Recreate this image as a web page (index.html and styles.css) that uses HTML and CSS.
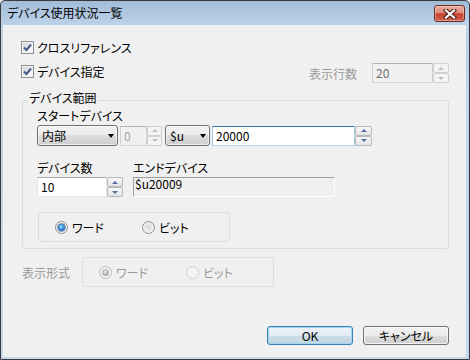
FILE: index.html
```html
<!DOCTYPE html>
<html lang="ja">
<head>
<meta charset="utf-8">
<title>デバイス使用状況一覧</title>
<link rel="stylesheet" href="styles.css">
</head>
<body>
<div class="window">
  <div class="titlebar">
    <span class="title">デバイス使用状況一覧</span>
    <div class="close">
      <svg width="14" height="10" viewBox="0 0 14 10">
        <path d="M3 1.5 L11 8.5 M11 1.5 L3 8.5" stroke="#4a1c17" stroke-width="4.2" stroke-linecap="square" fill="none"/>
        <path d="M3 1.5 L11 8.5 M11 1.5 L3 8.5" stroke="#ffffff" stroke-width="2.2" stroke-linecap="square" fill="none"/>
      </svg>
    </div>
  </div>
  <div class="client">
    <div class="row1">
      <div class="chk-label">
        <span class="checkbox"><svg width="11" height="11" viewBox="0 0 11 11"><path d="M2 5.5 L4.5 8 L9 2.5" stroke="#42578c" stroke-width="2" fill="none"/></svg></span>
        <span>クロスリファレンス</span>
      </div>
    </div>
    <div class="row2">
      <div class="chk-label chk-offset">
        <span class="checkbox"><svg width="11" height="11" viewBox="0 0 11 11"><path d="M2 5.5 L4.5 8 L9 2.5" stroke="#42578c" stroke-width="2" fill="none"/></svg></span>
        <span>デバイス指定</span>
      </div>
      <div class="rows-ctrl">
        <span class="dim rows-label">表示行数</span>
        <div class="spinbox">
          <div class="field disabled w-rows">20</div>
          <div class="spin disabled">
            <span class="spin-btn"><i class="arr-up"></i></span>
            <span class="spin-btn"><i class="arr-down"></i></span>
          </div>
        </div>
      </div>
    </div>

    <fieldset class="group-range">
      <legend>デバイス範囲</legend>
      <div class="range-body">
        <div class="lbl">スタートデバイス</div>
        <div class="start-row">
          <div class="combo w-combo1"><span>内部</span><i class="combo-arrow"></i></div>
          <div class="spinbox gap-after">
            <div class="field disabled w-num0">0</div>
            <div class="spin disabled w-spin15">
              <span class="spin-btn"><i class="arr-up"></i></span>
              <span class="spin-btn"><i class="arr-down"></i></span>
            </div>
          </div>
          <div class="combo w-combo2"><span>$u</span><i class="combo-arrow"></i></div>
          <div class="spinbox">
            <div class="field focus w-start">20000</div>
            <div class="spin w-spin17">
              <span class="spin-btn"><i class="arr-up"></i></span>
              <span class="spin-btn"><i class="arr-down"></i></span>
            </div>
          </div>
        </div>
        <div class="count-row">
          <div class="col col-count">
            <div class="lbl">デバイス数</div>
            <div class="spinbox field-row">
              <div class="field w-count">10</div>
              <div class="spin">
                <span class="spin-btn"><i class="arr-up"></i></span>
                <span class="spin-btn"><i class="arr-down"></i></span>
              </div>
            </div>
          </div>
          <div class="col">
            <div class="lbl">エンドデバイス</div>
            <div class="readonly field-row">$u20009</div>
          </div>
        </div>
        <div class="radio-group range-radios">
          <div class="radio-item"><span class="radio on"></span><span>ワード</span></div>
          <div class="radio-item"><span class="radio"></span><span>ビット</span></div>
        </div>
      </div>
    </fieldset>

    <div class="format-row">
      <span class="dim format-label">表示形式</span>
      <div class="radio-group disabled">
        <div class="radio-item"><span class="radio on"></span><span>ワード</span></div>
        <div class="radio-item"><span class="radio"></span><span>ビット</span></div>
      </div>
    </div>

    <div class="buttons">
      <div class="btn default">OK</div>
      <div class="btn">キャンセル</div>
    </div>
  </div>
</div>
</body>
</html>
```

FILE: styles.css
```css
* { box-sizing: border-box; }
html, body { margin: 0; padding: 0; }
body {
  width: 470px;
  height: 360px;
  overflow: hidden;
  background: #dfe9f3;
  font-family: "Noto Sans CJK JP", "Noto Sans", sans-serif;
  font-size: 12px;
  font-feature-settings: "palt";
  color: #000;
}

.window {
  width: 470px;
  height: 360px;
  border: 1px solid #3b3b3b;
  border-radius: 5px 5px 0 0;
  background: linear-gradient(#a2bbd7 0, #bcd2e9 24px, #c3d8ee 100%);
  display: flex;
  flex-direction: column;
}

.titlebar {
  height: 24px;
  flex: none;
  display: flex;
  justify-content: space-between;
  align-items: flex-start;
  padding: 0 4px 0 6px;
}
.title {
  line-height: 24px;
  color: #000;
}
.close {
  margin-top: 4px;
  width: 31px;
  height: 17px;
  border: 1px solid #6a2b24;
  border-radius: 3px;
  background: linear-gradient(#e8aa9b 0%, #dd8b79 45%, #c7412d 52%, #cf6450 100%);
  box-shadow: inset 0 0 0 1px rgba(255, 255, 255, 0.35);
  display: flex;
  align-items: center;
  justify-content: center;
}

.client {
  flex: 1;
  margin: 0 3px 2px 2px;
  background: #f0f0f0;
  padding: 0 17px 0 18px;
  display: flex;
  flex-direction: column;
}

.chk-label {
  display: flex;
  align-items: center;
  gap: 3px;
  line-height: 13px;
}
.checkbox {
  width: 13px;
  height: 13px;
  border: 1px solid #8e8f8f;
  background: linear-gradient(135deg, #c9cdd3 0%, #eceef0 60%, #fafafa 100%);
  box-shadow: inset 0 0 0 1px #f4f4f4;
  display: flex;
  align-items: center;
  justify-content: center;
  flex: none;
}

.row1 {
  margin-top: 16px;
  height: 13px;
  display: flex;
  align-items: center;
}
.row2 {
  margin-top: 9px;
  height: 20px;
  display: flex;
  justify-content: space-between;
  align-items: flex-start;
}
.chk-offset { margin-top: 2px; }

.rows-ctrl {
  display: flex;
  align-items: center;
  height: 20px;
}
.dim { color: #9a9a9a; }
.rows-label { margin-right: 15px; }

.spinbox {
  display: flex;
  align-items: center;
  height: 20px;
}
.field {
  height: 20px;
  border: 1px solid;
  border-color: #abadb3 #e2e3ea #e3e9ef #e2e3ea;
  background: #fff;
  padding: 0 3px;
  line-height: 18px;
  white-space: nowrap;
}
.field.disabled {
  background: #f0f0f0;
  border-color: #b4b4b4 #cfcfcf #d6d6d6 #cfcfcf;
  color: #6d6d6d;
}
.field.focus {
  border-color: #3d7bad #a4c9e3 #b7d9ed #a4c9e3;
}
.w-rows { width: 61px; }
.w-num0 { width: 27px; color: #a6a6a6 !important; }
.w-start { width: 143px; }
.w-count { width: 71px; }

.spin {
  width: 16px;
  height: 20px;
  display: flex;
  flex-direction: column;
  color: #55709f;
}
.spin.disabled { color: #bdbdbd; }
.w-spin15 { width: 15px; }
.w-spin17 { width: 17px; }
.spin-btn {
  flex: 1;
  border: 1px solid #b5b9be;
  border-radius: 2px;
  background: linear-gradient(#f7f7f7, #e4e4e4);
  display: flex;
  align-items: center;
  justify-content: center;
}
.spin.disabled .spin-btn {
  border-color: #d0d0d0;
  background: #f4f4f4;
}
.arr-up, .arr-down {
  width: 0;
  height: 0;
  border-left: 3px solid transparent;
  border-right: 3px solid transparent;
}
.arr-up { border-bottom: 3px solid currentColor; }
.arr-down { border-top: 3px solid currentColor; }

.group-range {
  margin: 8px 0 0 1px;
  padding: 0;
  border: 1px solid #d5dfe5;
  border-radius: 3px;
  min-width: 0;
}
.group-range legend {
  margin-left: 5px;
  padding: 0 1px 4px;
  line-height: 14px;
}
.range-body {
  padding: 0 0 6px 14px;
}
.lbl {
  line-height: 14px;
}
.start-row {
  margin-top: 2px;
  height: 21px;
  display: flex;
  align-items: center;
}
.combo {
  height: 21px;
  border: 1px solid #707070;
  border-radius: 3px;
  background: linear-gradient(#f2f2f2 0%, #ebebeb 50%, #dddddd 50%, #cfcfcf 100%);
  box-shadow: inset 0 0 0 1px rgba(255, 255, 255, 0.6);
  display: flex;
  align-items: center;
  justify-content: space-between;
  padding: 0 3px 0 4px;
  line-height: 19px;
}
.combo-arrow {
  width: 0;
  height: 0;
  border-left: 3.5px solid transparent;
  border-right: 3.5px solid transparent;
  border-top: 4px solid #000;
  margin-top: 1px;
}
.w-combo1 { width: 81px; margin-right: 2px; }
.w-combo2 { width: 45px; margin-right: 2px; }
.gap-after { margin-right: 3px; }

.count-row {
  margin-top: 15px;
  display: flex;
  gap: 10px;
}
.col { display: flex; flex-direction: column; }
.col-count { width: 86px; }
.field-row { margin-top: 2px; }
.readonly {
  width: 202px;
  height: 20px;
  border: 1px solid;
  border-color: #a0a0a0 #ffffff #ffffff #a0a0a0;
  background: #f0f0f0;
  padding: 0 1px;
  line-height: 12px;
}

.radio-group {
  width: 192px;
  height: 30px;
  border: 1px solid #d5dfe5;
  border-radius: 3px;
  display: flex;
  align-items: center;
  padding-left: 16px;
}
.range-radios { margin: 15px 0 0 1px; }
.radio-item {
  width: 88px;
  display: flex;
  align-items: center;
  gap: 4px;
}
.radio {
  width: 13px;
  height: 13px;
  border-radius: 50%;
  border: 1px solid #8e8f8f;
  background: radial-gradient(circle at 50% 45%, #d6d8db 0%, #eeeeee 55%, #fbfbfb 100%);
  display: flex;
  align-items: center;
  justify-content: center;
  flex: none;
}
.radio.on::after {
  content: "";
  width: 7px;
  height: 7px;
  border-radius: 50%;
  background: radial-gradient(circle at 45% 40%, #b6e6fc 0%, #3b96dc 40%, #1b4f96 100%);
  box-shadow: 0 0 0 0.5px #1c3c6e;
}
.radio-group.disabled { color: #9a9a9a; }
.radio-group.disabled .radio {
  border-color: #b9b9b9;
  background: #f4f4f4;
}
.radio-group.disabled .radio.on::after {
  background: radial-gradient(circle at 45% 40%, #e6e6e6 0%, #b4b4b4 50%, #979797 100%);
  box-shadow: none;
}
.radio-group.disabled .radio:not(.on) {
  border-color: #d2d2d2;
}

.format-row {
  margin-top: 8px;
  display: flex;
  align-items: center;
}
.format-label {
  margin-left: 1px;
  width: 48px;
  margin-right: 12px;
}

.buttons {
  margin-top: auto;
  margin-bottom: 12px;
  display: flex;
  justify-content: flex-end;
  gap: 10px;
}
.btn {
  width: 86px;
  height: 19px;
  border: 1px solid #707070;
  border-radius: 3px;
  background: linear-gradient(#f2f2f2 0%, #ebebeb 50%, #dddddd 50%, #cfcfcf 100%);
  box-shadow: inset 0 0 0 1px rgba(255, 255, 255, 0.7);
  text-align: center;
  line-height: 17px;
}
.btn.default {
  border-color: #3c7fb1;
  background: linear-gradient(#edf4f8 0%, #e0eaf1 50%, #cddde8 50%, #c3d5e2 100%);
  box-shadow: inset 0 0 0 1px #9fd6f0;
}
```
